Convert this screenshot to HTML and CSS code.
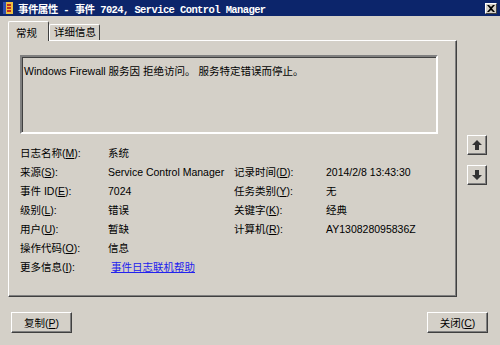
FILE: index.html
```html
<!DOCTYPE html>
<html lang="zh-CN">
<head>
    <meta charset="UTF-8">
    <title>事件属性</title>
    <link rel="stylesheet" href="styles.css">
</head>
<body>

    <div class="window">
        <!-- Title bar -->
        <header class="titlebar">
            <svg class="app-icon" width="10" height="12" viewBox="0 0 10 12">
                <rect x="0" y="0" width="10" height="12" fill="#f0c040"/>
                <rect x="0" y="0" width="3" height="12" fill="#3050b0"/>
                <rect x="4" y="2" width="4" height="2" fill="#c03020"/>
                <rect x="4" y="5" width="4" height="2" fill="#c03020"/>
                <rect x="4" y="8" width="4" height="2" fill="#c03020"/>
            </svg>
            <span class="title">事件属性 - 事件 7024, Service Control Manager</span>
            <span class="close-btn">
                <svg width="8" height="7" viewBox="0 0 8 7">
                    <path d="M0 0 L2 0 L4 2 L6 0 L8 0 L5 3.5 L8 7 L6 7 L4 5 L2 7 L0 7 L3 3.5 Z" fill="#000"/>
                </svg>
            </span>
        </header>

        <div class="content">
            <div class="main">
                <div class="tab-area">
                    <div class="tabs">
                        <div class="tab active">常规</div>
                        <div class="tab">详细信息</div>
                    </div>

                    <section class="panel">
                        <div class="message">Windows Firewall 服务因 拒绝访问。 服务特定错误而停止。</div>

                        <div class="fields">
                            <span>日志名称(<u>M</u>):</span><span>系统</span><span></span><span></span>
                            <span>来源(<u>S</u>):</span><span>Service Control Manager</span><span>记录时间(<u>D</u>):</span><span>2014/2/8 13:43:30</span>
                            <span>事件 ID(<u>E</u>):</span><span>7024</span><span>任务类别(<u>Y</u>):</span><span>无</span>
                            <span>级别(<u>L</u>):</span><span>错误</span><span>关键字(<u>K</u>):</span><span>经典</span>
                            <span>用户(<u>U</u>):</span><span>暂缺</span><span>计算机(<u>R</u>):</span><span>AY130828095836Z</span>
                            <span>操作代码(<u>O</u>):</span><span>信息</span><span></span><span></span>
                            <span>更多信息(<u>I</u>):</span><span class="link-cell"><a href="#">事件日志联机帮助</a></span><span></span><span></span>
                        </div>
                    </section>
                </div>

                <div class="side">
                    <button class="arrow-btn">
                        <svg width="10" height="10" viewBox="0 0 10 10"><path d="M5 0 L10 5 L7 5 L7 10 L3 10 L3 5 L0 5 Z" fill="#333"/></svg>
                    </button>
                    <button class="arrow-btn">
                        <svg width="10" height="10" viewBox="0 0 10 10"><path d="M5 10 L10 5 L7 5 L7 0 L3 0 L3 5 L0 5 Z" fill="#333"/></svg>
                    </button>
                </div>
            </div>

            <footer class="footer">
                <button class="btn">复制(<u>P</u>)</button>
                <button class="btn">关闭(<u>C</u>)</button>
            </footer>
        </div>
    </div>

</body>
</html>
```

FILE: styles.css
```css
/* General */
* {
    margin: 0;
    padding: 0;
    box-sizing: border-box;
}

body {
    width: 500px;
    height: 345px;
    overflow: hidden;
    background-color: #d4d0c8;
    font-family: "Liberation Sans", "Noto Sans CJK SC", sans-serif;
    font-size: 10.5px;
    color: #000;
}

.window {
    height: 345px;
    background-color: #d4d0c8;
}

/* Title bar */
.titlebar {
    height: 16px;
    background-color: #0c256b;
    display: flex;
    align-items: center;
    padding: 0 3px 0 3px;
}

.app-icon {
    flex-shrink: 0;
}

.title {
    margin-left: 5px;
    color: #fff;
    font-family: "Liberation Mono", "Noto Sans CJK SC", monospace;
    font-weight: bold;
    font-size: 10.5px;
    letter-spacing: -0.6px;
    white-space: nowrap;
    flex: 1;
}

.close-btn {
    width: 12px;
    height: 11px;
    background-color: #d4d0c8;
    border: 1px solid;
    border-color: #fff #404040 #404040 #fff;
    display: flex;
    align-items: center;
    justify-content: center;
}

/* Main area */
.content {
    padding: 0 0 0 8px;
}

.main {
    display: flex;
}

.tab-area {
    width: 449px;
}

.tabs {
    display: flex;
    align-items: flex-end;
    height: 24px;
    padding-top: 5px;
}

.tab {
    height: 16px;
    padding: 0 3px 0 4px;
    border: 1px solid;
    border-bottom: none;
    border-color: #fff #404040 #fff #fff;
    border-radius: 2px 2px 0 0;
    line-height: 15px;
}

.tab.active {
    width: 41px;
    height: 20px;
    padding: 4px 0 0 7px;
    position: relative;
    top: 1px;
    background-color: #d4d0c8;
    z-index: 1;
}

.panel {
    height: 257px;
    border: 1px solid;
    border-color: #fff #404040 #404040 #fff;
    box-shadow: inset -1px -1px 0 #808080;
    padding: 14px 0 0 11px;
}

.message {
    width: 418px;
    height: 79px;
    border: 2px solid;
    border-color: #808080 #fff #fff #808080;
    box-shadow: inset 1px 1px 0 #404040;
    padding: 6px 0 0 2px;
}

/* Detail fields */
.fields {
    margin-top: 9px;
    display: grid;
    grid-template-columns: 88px 126px 92px auto;
    grid-auto-rows: 19px;
    align-items: center;
    white-space: nowrap;
}

.fields u {
    text-decoration: underline;
}

.link-cell {
    padding-left: 3px;
}

.fields a {
    color: #2222ee;
    text-decoration: underline;
}

/* Side arrows */
.side {
    display: flex;
    flex-direction: column;
    gap: 10px;
    padding: 119px 0 0 10px;
}

.arrow-btn {
    width: 20px;
    height: 20px;
    background-color: #d4d0c8;
    border: 1px solid;
    border-color: #fff #404040 #404040 #fff;
    box-shadow: inset -1px -1px 0 #808080;
    display: flex;
    align-items: center;
    justify-content: center;
}

/* Footer */
.footer {
    display: flex;
    justify-content: space-between;
    padding: 15px 12px 0 3px;
}

.btn {
    width: 61px;
    height: 21px;
    background-color: #d4d0c8;
    border: 1px solid;
    border-color: #fff #404040 #404040 #fff;
    box-shadow: inset -1px -1px 0 #808080;
    font-family: "Liberation Sans", "Noto Sans CJK SC", sans-serif;
    font-size: 10.5px;
    color: #000;
}
```
